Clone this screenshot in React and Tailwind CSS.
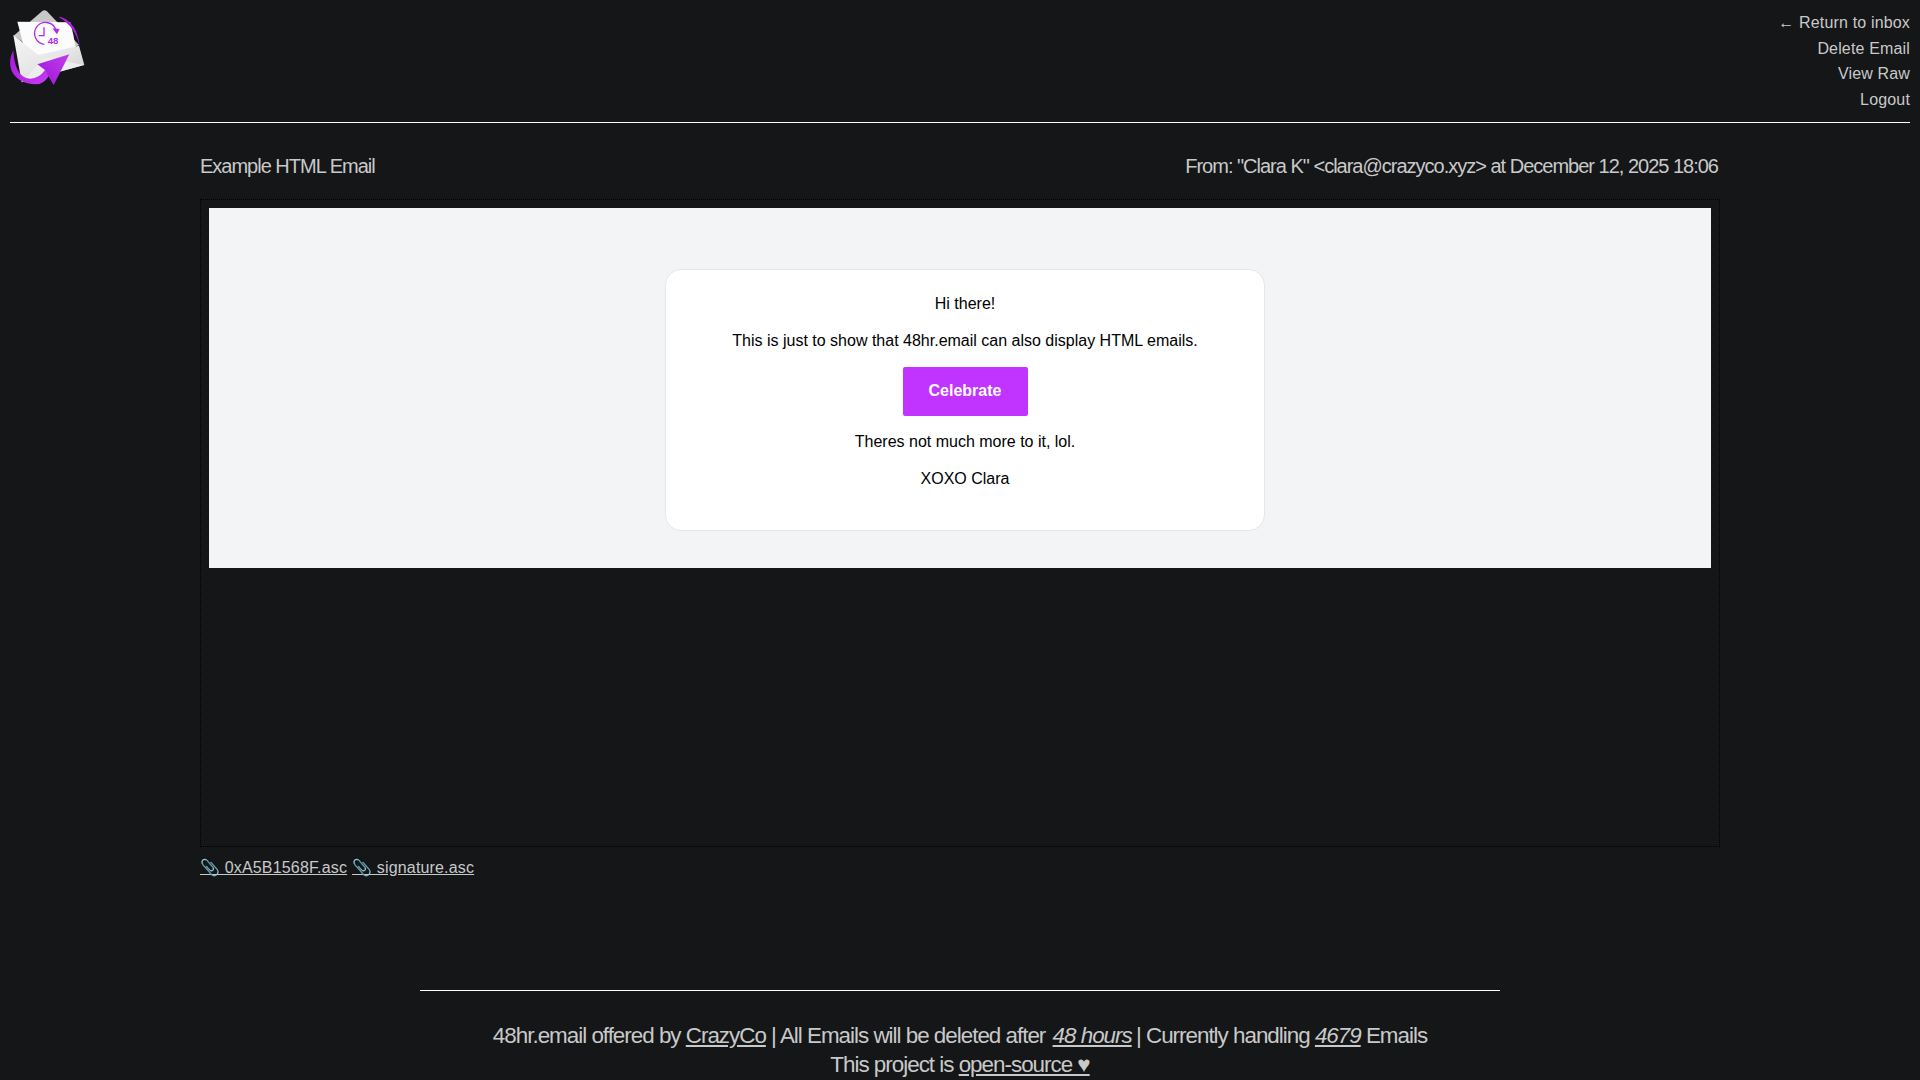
function Logo() {
  return (
    <svg viewBox="6 6 240 240" className="-ml-[3px] -mt-[3px] h-[80px] w-[80px] shrink-0" aria-hidden="true">
      <defs>
        <linearGradient id="front" x1="0" y1="0" x2="0.7" y2="1">
          <stop offset="0" stopColor="#f6f6f6" />
          <stop offset="0.6" stopColor="#e6e6e6" />
          <stop offset="1" stopColor="#d2d2d2" />
        </linearGradient>
        <linearGradient id="swoosh" x1="0" y1="0" x2="1" y2="1">
          <stop offset="0" stopColor="#a516dc" />
          <stop offset="1" stopColor="#c63cf5" />
        </linearGradient>
        <linearGradient id="arrow" x1="1" y1="0" x2="0" y2="1">
          <stop offset="0" stopColor="#c13df0" />
          <stop offset="1" stopColor="#9e14d6" />
        </linearGradient>
      </defs>
      {/* back of the envelope */}
      <path d="M26 92 L112 18 Q118 13 125 18 L222 120 L130 165 Z" fill="#c8c8c8" />
      {/* paper */}
      <path d="M37 50 L196 52 Q206 90 212 126 L112 168 L58 130 Z" fill="#fcfcfc" />
      {/* front */}
      <path d="M25 90 L100 150 L222 122 L238 180 L50 232 Z" fill="url(#front)" />
      <path d="M52 230 L112 164 Q122 156 135 160 L236 180 Z" fill="#ededed" />
      {/* clock */}
      <path d="M152 72 A33 33 0 1 0 118 118" fill="none" stroke="#b02fe6" strokeWidth="4" />
      <path d="M142 70 L164 72 L156 88 Z" fill="#b02fe6" />
      <path d="M117 67 V92 H101" fill="none" stroke="#b02fe6" strokeWidth="4" />
      <text x="128" y="118" fontSize="29" fontWeight="700" fill="#b02fe6" fontFamily="'Liberation Sans', sans-serif">48</text>
      {/* swoosh */}
      <path d="M165 35 Q216 50 224 124 Q210 64 162 37 Z" fill="#ad20e0" />
      <path d="M25 135 Q8 170 20 198 Q40 236 92 238 Q116 238 132 212 L120 195 Q98 226 66 220 Q28 208 25 135 Z" fill="url(#swoosh)" />
      <path d="M193 148 L97 178 L120 195 L130 214 L146 240 Z" fill="url(#arrow)" />
    </svg>
  );
}

export default function App() {
  return (
    <div className="min-h-screen bg-[#141618] p-[10px] text-[#c9c9c9] font-['Liberation_Sans',sans-serif]">
      <header className="flex h-[103px] items-start justify-between">
        <Logo />
        <nav className="flex flex-col items-end text-[16px] tracking-[0.16px]">
          <a className="leading-[26px]">← Return to inbox</a>
          <a className="leading-[25px]">Delete Email</a>
          <a className="leading-[26px]">View Raw</a>
          <a className="leading-[26px]">Logout</a>
        </nav>
      </header>
      <hr className="mt-[9px] border-t border-white" />

      <main className="mx-auto mt-[31px] w-[1520px]">
        <div className="flex justify-between pr-[2px] text-[20px] leading-[24px] tracking-[-1px]">
          <span>Example HTML Email</span>
          <span>From: "Clara K" &lt;clara@crazyco.xyz&gt; at December 12, 2025 18:06</span>
        </div>

        <div className="mt-[21px] h-[648px] border border-dotted border-black p-[8px]">
          <div className="flex h-[360px] justify-center bg-[#f3f4f6] pl-[10px] pt-[61px] text-[16px] leading-[24px] text-black">
            <div className="h-[262px] w-[600px] rounded-[16px] border border-[#e5e7eb] bg-white pt-[22px] text-center">
              <p>Hi there!</p>
              <p className="mt-[13px]">This is just to show that 48hr.email can also display HTML emails.</p>
              <a className="mx-auto mt-[14px] block h-[49px] w-[125px] rounded-[2px] bg-[#c133ff] font-bold leading-[48px] text-white">Celebrate</a>
              <p className="mt-[14px]">Theres not much more to it, lol.</p>
              <p className="mt-[13px]">XOXO Clara</p>
            </div>
          </div>
        </div>

        <div className="mt-[11px] flex gap-[5px] text-[16px] leading-[20px] tracking-[0.16px]">
          <a className="underline">📎 0xA5B1568F.asc</a>
          <a className="underline">📎 signature.asc</a>
        </div>
      </main>

      <footer className="mx-auto mt-[112px] w-[1080px] text-center text-[22.4px] leading-[29.4px] tracking-[-1px]">
        <hr className="mb-[30px] border-t border-white" />
        <p>
          48hr.email offered by <a className="underline">CrazyCo</a> | All Emails will be deleted after{" "}
          <a className="ml-[2px] -mr-[1px] italic underline">48 hours</a> | Currently handling <a className="italic underline">4679</a> Emails
        </p>
        <p>This project is <a className="underline">open-source ♥</a></p>
      </footer>
    </div>
  );
}
